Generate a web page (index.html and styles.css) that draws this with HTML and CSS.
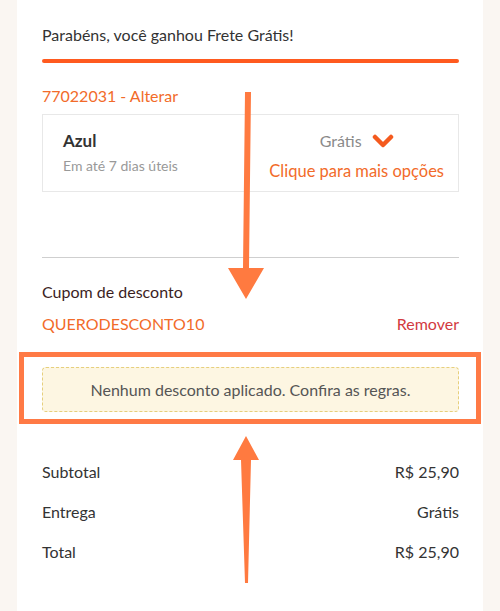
FILE: index.html
```html
<!DOCTYPE html>
<html lang="pt-BR">
<head>
    <meta charset="UTF-8">
    <meta name="viewport" content="width=device-width, initial-scale=1.0">
    <title>Carrinho</title>
    <link rel="stylesheet" href="styles.css">
</head>
<body>

    <main class="card">
        <p class="free-msg">Parabéns, você ganhou Frete Grátis!</p>
        <div class="progress"></div>

        <a href="#" class="cep">77022031 - Alterar</a>

        <div class="shipping">
            <div class="shipping-left">
                <strong>Azul</strong>
                <span>Em até 7 dias úteis</span>
            </div>
            <div class="shipping-right">
                <span class="price">Grátis
                    <svg class="chevron" width="22" height="14" viewBox="0 0 22 14">
                        <polyline points="3,3 11,11 19,3" fill="none" stroke="#f45a1e" stroke-width="4.5" stroke-linecap="round" stroke-linejoin="round"/>
                    </svg>
                </span>
                <a href="#" class="more">Clique para mais opções</a>
            </div>
        </div>

        <hr class="divider">

        <h3 class="coupon-title">Cupom de desconto</h3>
        <div class="coupon-row">
            <span class="coupon-code">QUERODESCONTO10</span>
            <a href="#" class="remove">Remover</a>
        </div>

        <div class="highlight">
            <div class="notice">Nenhum desconto aplicado. Confira as regras.</div>
        </div>

        <div class="totals">
            <div class="line"><span>Subtotal</span><span>R$ 25,90</span></div>
            <div class="line"><span>Entrega</span><span>Grátis</span></div>
            <div class="line"><span>Total</span><span>R$ 25,90</span></div>
        </div>
    </main>

    <!-- annotation arrows drawn over the page -->
    <svg class="arrows" width="500" height="611" viewBox="0 0 500 611">
        <polygon points="245,92 251,92 249,268 264,268 246,299 228,268 243,268" fill="#ff7a40"/>
        <polygon points="246,436 259,460 251,460 248,583 245,583 241,460 233,460" fill="#ff7a40"/>
    </svg>

</body>
</html>
```

FILE: styles.css
```css
/* Global */
body {
    margin: 0;
    background-color: #faf6f2;
    font-family: 'Lato', 'Open Sans', sans-serif;
    color: #333;
    font-size: 16px;
}

a {
    text-decoration: none;
}

.card {
    position: relative;
    background: white;
    margin: 0 17px;
    min-height: 611px;
    padding: 23px 24px 0 25px;
    box-sizing: border-box;
}

/* Free shipping */
.free-msg {
    margin: 0;
    line-height: 24px;
    color: #333;
}

.progress {
    height: 4px;
    margin-top: 12px;
    background-color: #ff5a1f;
    border-radius: 2px;
}

.cep {
    display: block;
    margin-top: 21px;
    line-height: 24px;
    color: #f26b2a;
}

/* Shipping option */
.shipping {
    display: flex;
    justify-content: space-between;
    align-items: center;
    margin-top: 6px;
    height: 78px;
    box-sizing: border-box;
    border: 1px solid #e8e8e8;
    padding: 0 14px 0 20px;
}

.shipping-left {
    display: flex;
    flex-direction: column;
    gap: 3px;
    margin-top: -1px;
}

.shipping-left strong {
    font-size: 17px;
    font-weight: 700;
    line-height: 24px;
    color: #333;
}

.shipping-left span {
    font-size: 14px;
    line-height: 20px;
    color: #999;
}

.shipping-right {
    display: flex;
    flex-direction: column;
    align-items: center;
    gap: 9px;
    margin-top: 6px;
}

.price {
    display: flex;
    align-items: center;
    gap: 10px;
    line-height: 20px;
    color: #8a8a8a;
}

.more {
    font-size: 16.5px;
    line-height: 22px;
    color: #f26b2a;
}

.divider {
    border: none;
    border-top: 1px solid #cfcfcf;
    margin: 65px 0 0;
}

/* Coupon */
.coupon-title {
    margin: 22px 0 0;
    font-size: 16px;
    font-weight: 400;
    line-height: 24px;
    color: #3b1e1e;
}

.coupon-row {
    display: flex;
    justify-content: space-between;
    margin-top: 8px;
    line-height: 24px;
}

.coupon-code {
    color: #f26b2a;
}

.remove {
    color: #d23a3f;
}

.highlight {
    margin: 16px -22px 0 -23px;
    border: 5px solid #ff7a45;
    padding: 10px 17px 7px 18px;
}

.notice {
    height: 45px;
    box-sizing: border-box;
    display: flex;
    align-items: center;
    justify-content: center;
    background-color: #fdf6e2;
    border: 1px dashed #e6cf7c;
    border-radius: 4px;
    color: #555;
}

/* Totals */
.totals {
    margin-top: 36px;
    display: flex;
    flex-direction: column;
    gap: 16px;
}

.line {
    display: flex;
    justify-content: space-between;
    line-height: 24px;
    color: #333;
}

.arrows {
    position: absolute;
    top: 0;
    left: 0;
    pointer-events: none;
}
```
